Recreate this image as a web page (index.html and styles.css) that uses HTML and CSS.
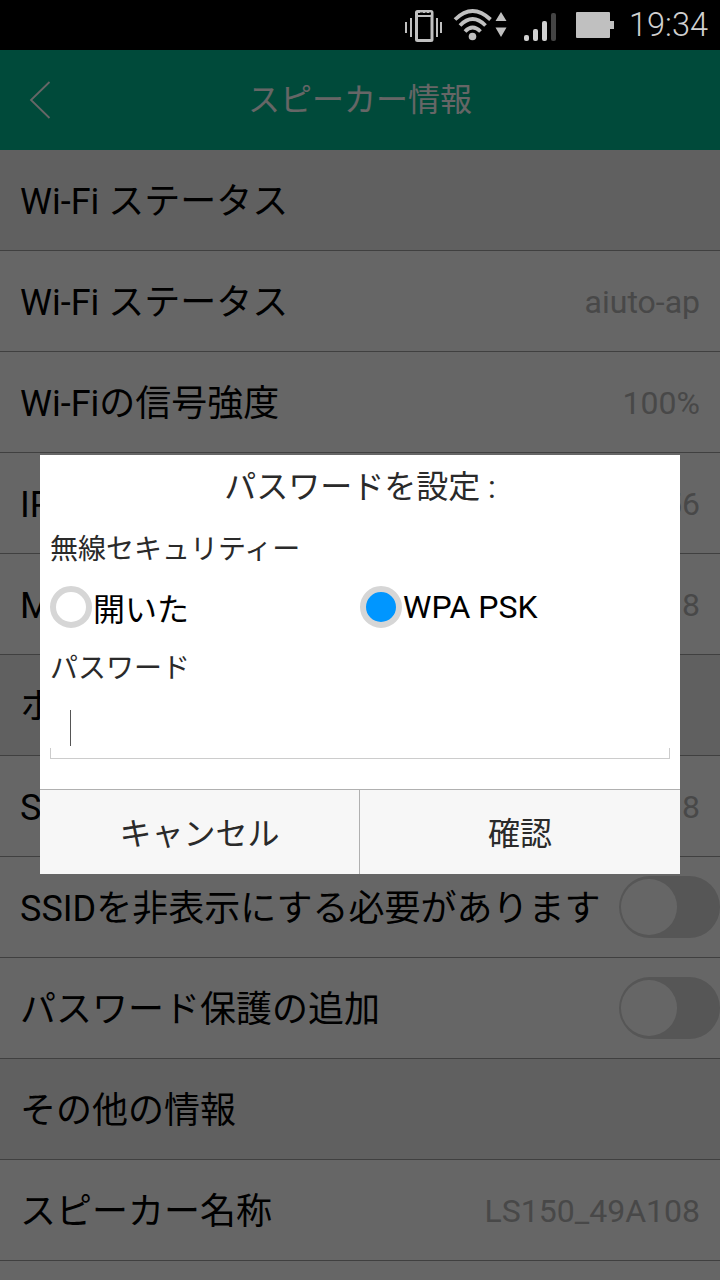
FILE: index.html
```html
<!DOCTYPE html>
<html lang="ja">
<head>
    <meta charset="UTF-8">
    <meta name="viewport" content="width=device-width, initial-scale=1.0">
    <title>スピーカー情報</title>
    <link rel="stylesheet" href="styles.css">
</head>
<body>
    <div class="status-bar">
        <svg class="status-icons" width="226" height="50" viewBox="394 0 226 50">
            <!-- vibrate -->
            <g fill="none" stroke="#c0c0c0" stroke-width="2">
                <path d="M406 22v11M411 18v19M437 18v19M441 22v11"/>
                <rect x="416.500" y="11.500" width="15.500" height="29" rx="1" stroke-width="3"/>
                <path d="M416 16h16" stroke-width="2"/>
                <path d="M420 13.500h3M425 13.500h2M429 13.500h2" stroke="#000"/>
            </g>
            <!-- wifi -->
            <g fill="none" stroke="#c0c0c0" stroke-width="3.800">
                <path d="M455 19.500Q472.500 2.500 490.500 19.500"/>
                <path d="M460 25.500Q472.500 12.500 485.500 25.500"/>
                <path d="M465 31.500Q472.500 23.500 480.500 31.500"/>
            </g>
            <circle cx="472.500" cy="36.500" r="3.800" fill="#c0c0c0"/>
            <path d="M501 12l5.500 9h-11zM501 37l5.500-9.500h-11z" fill="#c0c0c0"/>
            <!-- signal -->
            <g fill="#d0d0d0">
                <rect x="524" y="35" width="5" height="6" rx="2"/>
                <rect x="533" y="29" width="5" height="12" rx="2"/>
                <rect x="542" y="21" width="5" height="20" rx="2"/>
                <rect x="551" y="13" width="5" height="28" rx="2" fill="#444"/>
            </g>
            <!-- battery -->
            <path d="M577 12h32q1 0 1 1v8h4v8h-4v8q0 1-1 1h-32q-1 0-1-1v-24q0-1 1-1z" fill="#c0c0c0"/>
        </svg>
        <span class="clock">19:34</span>
    </div>

    <div class="screen">
        <header class="header">
            <svg class="back" width="24" height="40" viewBox="0 0 24 40">
                <path d="M21.500 2L3 20l18.500 18" fill="none" stroke="#fff" stroke-width="1.800"/>
            </svg>
            <h1 class="header-title">スピーカー情報</h1>
        </header>

        <main class="list">
            <div class="row section"><span>Wi-Fi ステータス</span></div>
            <div class="row"><span>Wi-Fi ステータス</span><span class="value">aiuto-ap</span></div>
            <div class="row"><span>Wi-Fiの信号強度</span><span class="value">100%</span></div>
            <div class="row"><span>IP</span><span class="value">56</span></div>
            <div class="row"><span>M</span><span class="value">8</span></div>
            <div class="row section"><span>ホ</span></div>
            <div class="row"><span>S</span><span class="value">8</span></div>
            <div class="row"><span>SSIDを非表示にする必要があります</span><span class="toggle"></span></div>
            <div class="row"><span>パスワード保護の追加</span><span class="toggle"></span></div>
            <div class="row section"><span>その他の情報</span></div>
            <div class="row"><span>スピーカー名称</span><span class="value">LS150_49A108</span></div>
            <div class="row"></div>
        </main>

        <div class="overlay">
            <form class="dialog">
                <div class="dialog-body">
                    <h2 class="dialog-title">パスワードを設定 :</h2>
                    <div class="label">無線セキュリティー</div>
                    <div class="radios">
                        <label class="radio"><span class="dot"></span>開いた</label>
                        <label class="radio"><span class="dot checked"></span>WPA PSK</label>
                    </div>
                    <div class="label">パスワード</div>
                    <div class="field">
                        <span class="cursor"></span>
                        <div class="field-line"></div>
                    </div>
                </div>
                <div class="buttons">
                    <button type="button" class="button">キャンセル</button>
                    <button type="button" class="button">確認</button>
                </div>
            </form>
        </div>
    </div>
</body>
</html>
```

FILE: styles.css
```css
* {
    box-sizing: border-box;
}

body {
    margin: 0;
    width: 720px;
    height: 1280px;
    overflow: hidden;
    font-family: Roboto, "Noto Sans CJK JP", sans-serif;
    background-color: #000;
}

.status-bar {
    display: flex;
    height: 50px;
    padding-left: 394px;
    background-color: #000;
}

.status-icons {
    flex: none;
}

.clock {
    margin-left: 9px;
    font-size: 32.5px;
    font-weight: 300;
    line-height: 50px;
    color: #d0d0d0;
}

.screen {
    position: relative;
    height: 1230px;
    overflow: hidden;
    background-color: #fff;
}

.header {
    display: grid;
    grid-template-columns: 100px 1fr 100px;
    align-items: center;
    height: 100px;
    background-color: #00b891;
    color: #fff;
}

.back {
    margin-left: 28px;
}

.header-title {
    margin: 0;
    font-size: 32px;
    font-weight: 400;
    line-height: 48px;
    text-align: center;
}

.row {
    display: flex;
    align-items: center;
    justify-content: space-between;
    height: 101px;
    padding: 0 0 0 20px;
    border-bottom: 1px solid #a0a0a0;
    font-size: 36px;
    line-height: 54px;
    white-space: nowrap;
    color: #000;
}

.row span:first-child {
    padding-top: 3px;
}

.section {
    background-color: #f0f0f0;
}

.value {
    margin-right: 20px;
    padding-top: 2px;
    font-size: 32px;
    color: #b4b4b4;
}

.toggle {
    width: 101px;
    height: 62px;
    padding: 3px 2px;
    border-radius: 31px;
    background-color: #d6d6d6;
}

.toggle::before {
    content: "";
    display: block;
    width: 56px;
    height: 56px;
    border-radius: 50%;
    background-color: #fff;
}

/* dims everything under the dialog */
.overlay {
    position: absolute;
    inset: 0;
    padding: 405px 40px 0;
    background-color: rgba(0, 0, 0, 0.6);
}

.dialog {
    height: 419px;
    background-color: #fff;
    color: #2a2a2a;
}

.dialog-body {
    height: 334px;
    padding: 8px 10px 0;
}

.dialog-title {
    margin: 0;
    font-size: 32px;
    font-weight: 400;
    line-height: 48px;
    text-align: center;
}

.label {
    height: 73px;
    padding-top: 2px;
    font-size: 28px;
    line-height: 74px;
}

.radios {
    display: grid;
    grid-template-columns: 1fr 1fr;
    height: 46px;
}

.radio {
    display: flex;
    align-items: center;
    font-size: 32px;
    color: #000;
}

.dot {
    width: 42px;
    height: 42px;
    margin-right: 1px;
    border: 6px solid #d6d6d6;
    border-radius: 50%;
    background-color: #fff;
}

.checked {
    background-color: #0096ff;
}

.field {
    padding-top: 7px;
}

.cursor {
    display: block;
    width: 1px;
    height: 36px;
    margin-left: 20px;
    background-color: #555;
}

.field-line {
    height: 11px;
    margin-top: 2px;
    border: 1px solid #ccc;
    border-top: none;
}

.buttons {
    display: grid;
    grid-template-columns: 1fr 1fr;
    height: 85px;
    border-top: 1px solid #b0b0b0;
}

.button {
    border: none;
    padding: 0 0 3px;
    font-family: inherit;
    font-size: 32px;
    color: #2a2a2a;
    background-color: #f7f7f7;
}

.button:first-child {
    border-right: 1px solid #b0b0b0;
}
```
